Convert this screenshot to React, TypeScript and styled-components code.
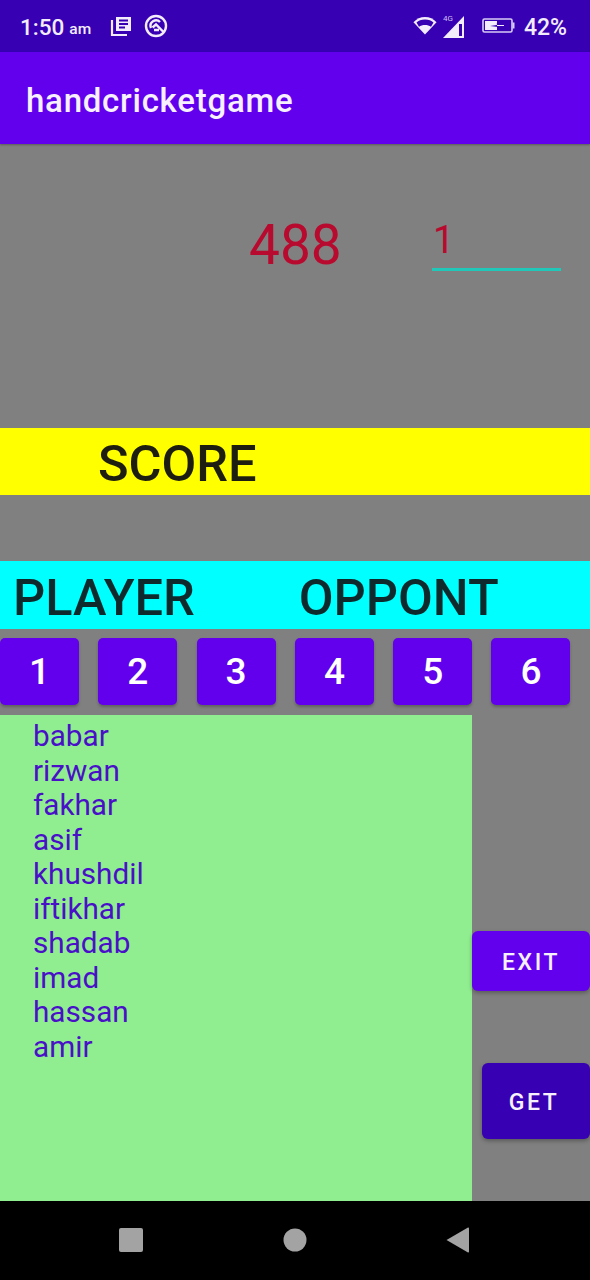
import React from "react";
import styled, { createGlobalStyle } from "styled-components";

const Global = createGlobalStyle`
  html, body { margin: 0; padding: 0; background: #808080; }
  * { box-sizing: border-box; }
`;
const Screen = styled.div`
  width: 590px; height: 1280px; display: flex; flex-direction: column; overflow: hidden;
  font-family: Roboto, "Noto Sans", sans-serif; background: #808080;
`;
const StatusBar = styled.div`
  height: 52px; background: #3700b3; color: #f3ecfb; display: flex; align-items: center; padding: 2px 23px 0 20px; flex: none;
`;
const Clock = styled.span`font-size: 22.5px; font-weight: 500; letter-spacing: 0;`;
const Meridiem = styled.span`font-size: 15.5px; font-weight: 500; margin-left: 5px; margin-top: 4px;`;
const StatusIcons = styled.div`display: flex; align-items: center; gap: 12px; margin-left: 19px; margin-top: -3px;`;
const Spacer = styled.div`flex: 1;`;
const StatusGroup = styled.div`display: flex; align-items: center; gap: 6px; margin-top: -3px;`;
const BatteryWrap = styled.div`display: flex; margin-left: 11px;`;
const Percent = styled.span`font-size: 23px; font-weight: 500; margin-left: 9px;`;
const AppBar = styled.div`
  height: 92px; background: #6200ee; color: #f7f0fe; display: flex; align-items: center; padding: 4px 0 0 26px;
  font-size: 33px; font-weight: 500; letter-spacing: 0.75px; flex: none; box-shadow: 0 1px 2px rgba(0,0,0,.3);
`;
const ScorePanel = styled.div`height: 284px; flex: none; padding-top: 69px; display: flex; align-items: flex-start;`;
const ScoreValue = styled.div`
  margin-left: 249px; width: 183px; font-size: 55px; line-height: 64px; color: #b80a2e;
`;
const NumberInput = styled.div`
  width: 129px; height: 58px; border-bottom: 3px solid #1fc8b8; color: #b80a2e; font-size: 38px; line-height: 54px;
  padding-left: 1px;
`;
const Banner = styled.div<{ $bg: string; $h: number }>`
  height: ${p => p.$h}px; flex: none; background: ${p => p.$bg}; color: #0f2a2c; display: flex; align-items: center;
  padding-top: 4px; font-size: 50.5px; font-weight: 500;
`;
const ScoreLabel = styled.span`margin-left: 98px; color: #1e1e10;`;
const Gap = styled.div`height: 66px; flex: none;`;
const BannerLabel = styled.span<{ $left: number }>`margin-left: ${p => p.$left}px;`;
const Numbers = styled.div`display: flex; gap: 19.3px; padding-top: 9px; height: 86px; flex: none;`;
const Key = styled.button`
  width: 79px; height: 67px; border: 0; border-radius: 5px; background: #6200ee; color: #fff; padding: 0;
  font: 500 37px Roboto, sans-serif; box-shadow: 0 2px 3px rgba(0,0,0,.25);
`;
const Bottom = styled.div`flex: 1; display: flex; min-height: 0;`;
const PlayerList = styled.ul`
  width: 472px; background: #90ee90; margin: 0; padding: 4px 0 0 33px; list-style: none; color: #4a10c8;
  font-size: 29.7px; line-height: 34.5px; flex: none;
`;
const Actions = styled.div`flex: 1; display: flex; flex-direction: column; align-items: flex-end; padding-top: 216px;`;
const ActionButton = styled.button<{ $w: number; $h: number; $bg: string; $mt: number; $pr: number }>`
  width: ${p => p.$w}px; height: ${p => p.$h}px; background: ${p => p.$bg}; margin-top: ${p => p.$mt}px;
  border: 0; border-radius: 6px; color: #f7f0fe; padding: 2px ${p => p.$pr}px 0 0; font: 500 23px Roboto, sans-serif; letter-spacing: 2.6px;
  box-shadow: 0 2px 4px rgba(0,0,0,.3);
`;
const NavBar = styled.div`
  height: 79px; background: #000; flex: none; display: flex; align-items: center; padding-bottom: 2px;
`;
const NavIcons = styled.div`display: flex; align-items: center; margin-left: 118px; gap: 139px;`;
const BackSlot = styled.div`margin-left: -1px;`;

const NewsIcon = () => (
  <svg width="22" height="22" viewBox="0 0 22 22" fill="none" stroke="#f3ecfb" strokeWidth="2.2">
    <path d="M2 5v15h15" />
    <rect x="6" y="2" width="15" height="14" fill="#f3ecfb" stroke="none" />
    <path d="M9 5.5h9M9 9h9M9 12.5h6" stroke="#3700b3" strokeWidth="1.8" />
  </svg>
);
const QIcon = () => (
  <svg width="24" height="24" viewBox="0 0 24 24" fill="none" stroke="#f3ecfb" strokeWidth="2.4">
    <circle cx="12" cy="12" r="10" />
    <path d="M7 14a5.5 5.500 0 0 1 9-6" />
    <path d="M8.5 13.5 12 10.5l8 8M10 16h5" />
  </svg>
);
const WifiIcon = () => (
  <svg width="24" height="19" viewBox="0 0 26 20" preserveAspectRatio="none">
    <path d="M13 19.5 0.5 6.5C4 3 8 1 13 1s9 2 12.5 5.5z" fill="#f3ecfb" />
    <path d="M13 9.5c-2.5 0-4.8.6-6.5 1.8L3.8 6.8C6 5 9 3.800 13 3.800S20 5 22.200 6.800l-2.700 4.500C17.800 10.100 15.500 9.500 13 9.500z" fill="#3700b3" />
  </svg>
);
const SignalIcon = () => (
  <svg width="22" height="26" viewBox="0 0 22 26">
    <text x="0" y="8" fontSize="8" fontFamily="Roboto" fill="#cdbff0">4G</text>
    <path d="M0 25 21 3v22z" fill="#f3ecfb" />
    <rect x="16" y="11" width="3" height="12" fill="#3700b3" />
  </svg>
);
const BatteryIcon = () => (
  <svg width="33" height="15" viewBox="0 0 33 15">
    <rect x="1" y="1" width="29" height="13" rx="1.5" fill="none" stroke="#d9ccf5" strokeWidth="1.6" />
    <rect x="30.5" y="4.5" width="2" height="6" fill="#d9ccf5" />
    <rect x="3" y="3" width="12" height="9" fill="#f3ecfb" />
    <path d="M8 8l8-1.2-2-1 8 1-7 1.2 1 1z" fill="#3700b3" />
    <path d="M15 7.5h7" stroke="#f3ecfb" strokeWidth="1" />
  </svg>
);
const SquareIcon = () => (
  <svg width="26" height="26" viewBox="0 0 26 26" style={{ display: "block" }}><rect x="1" y="1" width="24" height="24" rx="2" fill="#a3a3a3" /></svg>
);
const CircleIcon = () => (
  <svg width="24" height="24" viewBox="0 0 24 24" style={{ display: "block" }}><circle cx="12" cy="12" r="11.5" fill="#a3a3a3" /></svg>
);
const BackIcon = () => (
  <svg width="26" height="28" viewBox="0 0 26 28" style={{ display: "block" }}><path d="M1.5 14 23 1.5q1-.3 1 1v23q0 1.3-1 1z" fill="#a3a3a3" /></svg>
);

const players = ["babar", "rizwan", "fakhar", "asif", "khushdil", "iftikhar", "shadab", "imad", "hassan", "amir"];

export default function App() {
  return (
    <Screen>
      <Global />
      <StatusBar>
        <Clock>1:50</Clock>
        <Meridiem>am</Meridiem>
        <StatusIcons>
          <NewsIcon />
          <QIcon />
        </StatusIcons>
        <Spacer />
        <StatusGroup>
          <WifiIcon />
          <SignalIcon />
          <BatteryWrap><BatteryIcon /></BatteryWrap>
        </StatusGroup>
        <Percent>42%</Percent>
      </StatusBar>
      <AppBar>handcricketgame</AppBar>
      <ScorePanel>
        <ScoreValue>488</ScoreValue>
        <NumberInput>1</NumberInput>
      </ScorePanel>
      <Banner $bg="#ffff00" $h={67}><ScoreLabel>SCORE</ScoreLabel></Banner>
      <Gap />
      <Banner $bg="#00ffff" $h={68}>
        <BannerLabel $left={13}>PLAYER</BannerLabel>
        <BannerLabel $left={104}>OPPONT</BannerLabel>
      </Banner>
      <Numbers>
        {[1, 2, 3, 4, 5, 6].map(n => <Key key={n}>{n}</Key>)}
      </Numbers>
      <Bottom>
        <PlayerList>
          {players.map(p => <li key={p}>{p}</li>)}
        </PlayerList>
        <Actions>
          <ActionButton $w={118} $h={60} $bg="#6200ee" $mt={0} $pr={0}>EXIT</ActionButton>
          <ActionButton $w={108} $h={76} $bg="#3700b3" $mt={72} $pr={4}>GET</ActionButton>
        </Actions>
      </Bottom>
      <NavBar>
        <NavIcons>
          <SquareIcon />
          <CircleIcon />
          <BackSlot><BackIcon /></BackSlot>
        </NavIcons>
      </NavBar>
    </Screen>
  );
}
